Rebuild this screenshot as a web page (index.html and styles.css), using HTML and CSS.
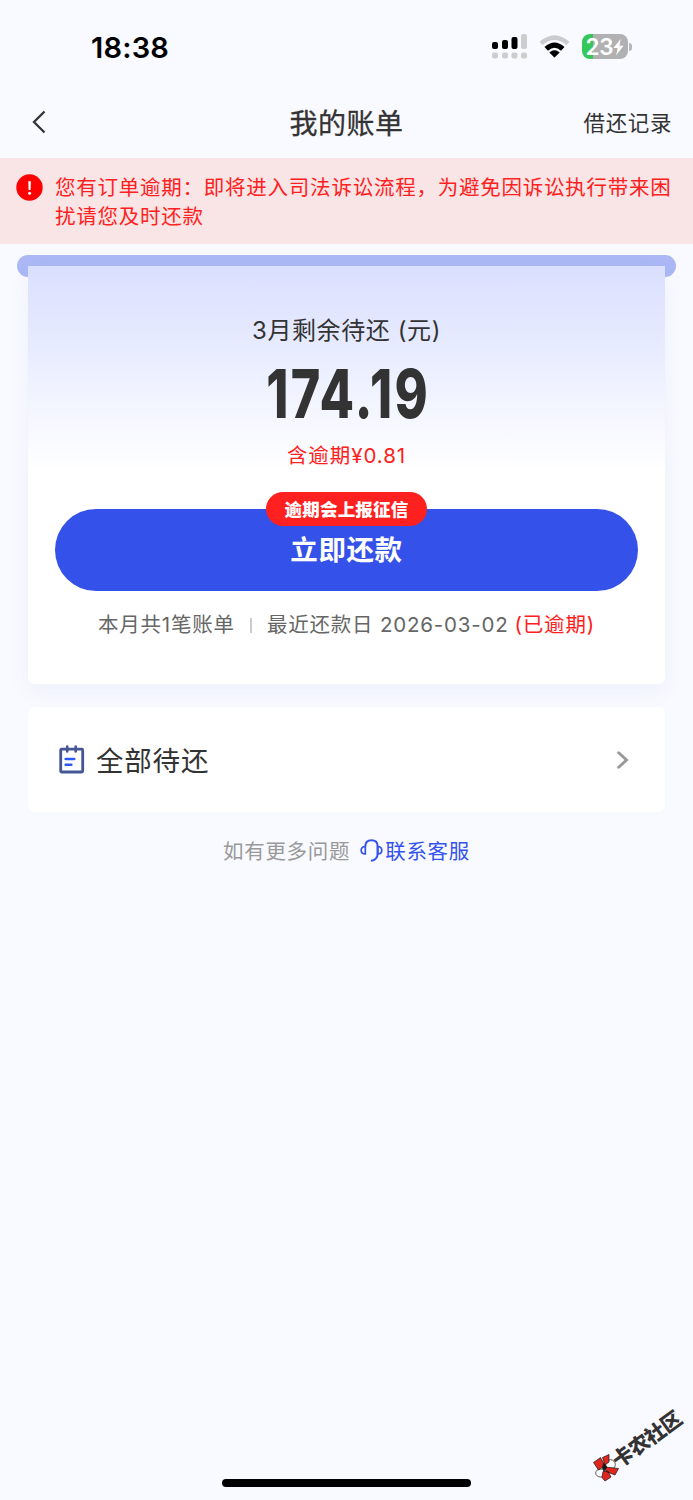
FILE: index.html
```
<!DOCTYPE html>
<html lang="zh-CN">
<head>
<meta charset="utf-8">
<title>我的账单</title>
<link rel="stylesheet" href="styles.css">
</head>
<body>
<div class="screen">
  <div class="status">
    <span class="time">18:38</span>
    <div class="indicators">
      <svg class="signal" width="36" height="26" viewBox="0 0 36 26">
        <g fill="#000"><rect x="0" y="8" width="6" height="7" rx="2"/><rect x="10" y="6" width="6" height="9" rx="2"/><rect x="19.5" y="3" width="6" height="12" rx="2"/></g>
        <g fill="#cdcdcf"><rect x="29" y="0" width="6" height="15" rx="2"/><rect x="0" y="18.500" width="6" height="6" rx="2"/><rect x="10" y="18.500" width="6" height="6" rx="2"/><rect x="19.500" y="18.500" width="6" height="6" rx="2"/><rect x="29" y="18.500" width="6" height="6" rx="2"/></g>
      </svg>
      <svg class="wifi" width="31" height="24" viewBox="0 0 31 24">
        <path d="M.5 6.800Q15.500-6.200 30.500 6.800L27.500 10Q15.500-.2 3.500 10Z" fill="#cbcbcd"/>
        <path d="M5.500 12Q15.500 3 25.500 12L22 15.700Q15.500 10 9 15.700Z"/>
        <path d="M10.700 17.500Q15.500 13.500 20.300 17.500L15.500 22.300Z" stroke="#000" stroke-width=".6" stroke-linejoin="round"/>
      </svg>
      <div class="battery">
        <span>23</span>
        <svg width="12" height="18" viewBox="0 0 12 18"><path d="M8.500 0L.5 10H5L3.500 18L11.500 7.500H7Z" fill="#fff"/></svg>
      </div>
      <i class="battery-tip"></i>
    </div>
  </div>

  <header class="nav">
    <svg width="14" height="24" viewBox="0 0 14 24"><path d="M12.500 1.500L2 12L12.500 22.500" fill="none" stroke="#333" stroke-width="2.300"/></svg>
    <h1>我的账单</h1>
    <span class="history">借还记录</span>
  </header>

  <section class="alert">
    <svg width="27" height="27" viewBox="0 0 27 27"><circle cx="13.500" cy="13.500" r="13.200" fill="#f00"/><path d="M12.300 7.300h2.600l-.3 8.700h-2z" fill="#fff"/><circle cx="13.600" cy="19.300" r="1.500" fill="#fff"/></svg>
    <p>您有订单逾期：即将进入司法诉讼流程，为避免因诉讼执行带来困<br>扰请您及时还款</p>
  </section>

  <main>
    <div class="slot"></div>
    <section class="bill">
      <p class="month">3月剩余待还 (元)</p>
      <p class="amount"><span>174.19</span></p>
      <p class="overdue">含逾期¥0.81</p>
      <div class="pay"><b class="tag">逾期会上报征信</b><span>立即还款</span></div>
      <div class="summary"><span>本月共1笔账单</span><i></i><span>最近还款日 <span class="date">2026-03-02</span></span><em>(已逾期)</em></div>
    </section>
    <section class="all">
      <svg width="26" height="29" viewBox="0 0 26 29" fill="none"><rect x="1.700" y="4.200" width="22" height="22.800" rx="1" stroke="#455692" stroke-width="2.800"/><path d="M8.200 1.500v5M16.700 1.500v5" stroke="#455692" stroke-width="2.600" stroke-linecap="round"/><path d="M6.700 14h8.500M6.700 19.700h5.600" stroke="#2b59fa" stroke-width="2.600" stroke-linecap="round"/></svg>
      <span>全部待还</span>
      <svg class="chevron" width="12" height="18" viewBox="0 0 12 18"><path d="M1.700 1.700L9.500 9L1.700 16.300" fill="none" stroke="#999" stroke-width="2.900" stroke-linecap="round"/></svg>
    </section>
    <p class="support"><span>如有更多问题</span>
      <svg width="23" height="23" viewBox="0 0 23 23" fill="none" stroke="#3453ec" stroke-width="2"><path d="M5.300 7.500C5.300 3 8 1.200 11.500 1.200S17.700 3 17.700 7.500V15Q17.300 21 11 21.800"/><path d="M5.300 7.500V15Q1.200 15 1.200 11.300T5.300 7.500ZM17.600 7.500V15Q21.800 15 21.800 11.300T17.600 7.500Z" stroke-width="1.700"/></svg>
      <a>联系客服</a></p>
  </main>

  <div class="home-bar"></div>
  <div class="watermark">
    <svg width="27" height="28" viewBox="0 0 27 28" stroke="#171717" stroke-width=".7"><circle cx="17.500" cy="10.500" r="4.800" fill="#fff"/><ellipse cx="7.500" cy="19" rx="4.800" ry="4" fill="#fff"/><path d="M.5 8.500L7.500 3.500L12 11.500L5.500 16Z M9.500 3.500L16 .5V8L12 11Z M12 13L25.500 14.500L22 21L13 17.500Z M10 17.500L15 17L18 23L12 27L9 23.500Z" fill="#df261f"/><path d="M10.500 9.500L14 13L11 17L9.500 14Z" fill="#171717"/></svg>
    <b>卡农社区</b>
  </div>
</div>
</body>
</html>
```
FILE: styles.css
```
* { box-sizing: border-box; margin: 0; padding: 0; }
body { font-family: Inter, "Noto Sans CJK SC", sans-serif; color: #333; background: #f9faff; }
svg { display: block; flex: none; }
.screen { position: relative; width: 693px; height: 1500px; overflow: hidden; background: #f9faff; }

.status { height: 88px; padding: 0 61px 0 91px; display: flex; justify-content: space-between; }
.time { margin-top: 30px; font-size: 29px; line-height: 35px; font-weight: 600; color: #000; letter-spacing: .2px; }
.indicators { display: flex; padding-top: 34px; }
.wifi { margin: 1px 12px 0 11px; }
.battery { width: 46px; height: 25px; border-radius: 8px; background: linear-gradient(90deg, #34c759 11px, #b1b1b3 11px); display: flex; align-items: center; justify-content: center; color: #fff; font-size: 22.500px; font-weight: 600; letter-spacing: -.2px; }
.battery svg { width: 11px; }
.battery-tip { width: 3px; height: 8px; margin: 9px 0 0 1px; border-radius: 0 3px 3px 0; background: #b7b7b9; }

.nav { height: 70px; padding: 0 21px 0 32px; display: grid; grid-template-columns: 108px 1fr 119px; align-items: center; }
.nav h1 { margin-top: 1px; text-align: center; font-size: 28px; font-weight: 400; line-height: 40px; letter-spacing: .5px; -webkit-text-stroke: .3px #333; }
.nav svg { margin-top: -2px; }
.history { margin-top: -1px; font-size: 21.500px; line-height: 32px; letter-spacing: .6px; text-align: right; white-space: nowrap; }

.alert { height: 86px; padding: 15px 0 0 16px; display: flex; gap: 12px; background: #fae5e6; color: #ff2020; }
.alert svg { margin-top: 1px; }
.alert p { font-size: 20.500px; line-height: 29px; letter-spacing: .76px; white-space: nowrap; }

main { padding: 11px 28px 0; }
.slot { height: 22px; margin: 0 -11px; border-radius: 11px; background: #abb8f5; }
.bill { position: relative; height: 418px; margin-top: -11px; padding: 48px 27px 0; border-radius: 0 0 7px 7px; background: linear-gradient(#dadfff, #e7ebff 80px, #f4f6ff 145px, #fff 205px); box-shadow: 0 8px 22px rgba(70, 100, 210, .06); text-align: center; }
.month { font-size: 24px; line-height: 34px; letter-spacing: .6px; }
.amount { height: 66px; margin-top: 13px; font-family: Inter, sans-serif; font-size: 67px; line-height: 66px; font-weight: 800; }
.amount span { display: inline-block; margin-right: -3px; letter-spacing: 3px; transform: scaleX(.75); }
.overdue { margin-top: 13px; font-size: 20.500px; line-height: 32px; letter-spacing: .95px; color: #ff2020; }
.pay { position: relative; height: 82px; margin-top: 37px; border-radius: 41px; background: #3452e9; color: #fff; font-size: 27.500px; font-weight: 700; line-height: 82px; letter-spacing: .6px; }
.tag { position: absolute; left: 211px; top: -17px; width: 161px; height: 34px; border-radius: 17px; background: #ff2020; font-size: 17.500px; line-height: 35px; letter-spacing: .2px; }
.summary { margin-top: 18px; height: 32px; display: flex; align-items: center; justify-content: center; white-space: nowrap; font-size: 20.500px; line-height: 32px; letter-spacing: .8px; color: #666; }
.summary i { width: 2px; height: 15px; margin: 0 15px 0 15px; background: #ccc; }
.summary em { margin-left: 6px; color: #ff2020; font-style: normal; }
.all { position: relative; height: 105px; margin-top: 23px; padding: 0 36px 0 31px; border-radius: 7px; display: flex; align-items: center; background: #fff; font-size: 27.500px; line-height: 40px; letter-spacing: .8px; }
.all span { margin: 3px 0 0 11px; }
.chevron { margin-left: auto; }
.support { margin-top: 24px; height: 32px; display: flex; justify-content: center; align-items: center; font-size: 20.500px; line-height: 32px; letter-spacing: .7px; color: #999; }
.support svg { margin: -3px 2px 0 10px; }
.support a { color: #3453ec; }

.home-bar { position: absolute; left: 222px; top: 1479px; width: 249px; height: 8px; border-radius: 4px; background: #000; }
.watermark { position: absolute; left: 593px; top: 1454px; }
.watermark b { position: absolute; left: 22px; top: -3px; font-size: 20.500px; font-weight: 900; line-height: 24px; letter-spacing: -.7px; white-space: nowrap; transform: rotate(-36deg); transform-origin: 0 50%; }
```
